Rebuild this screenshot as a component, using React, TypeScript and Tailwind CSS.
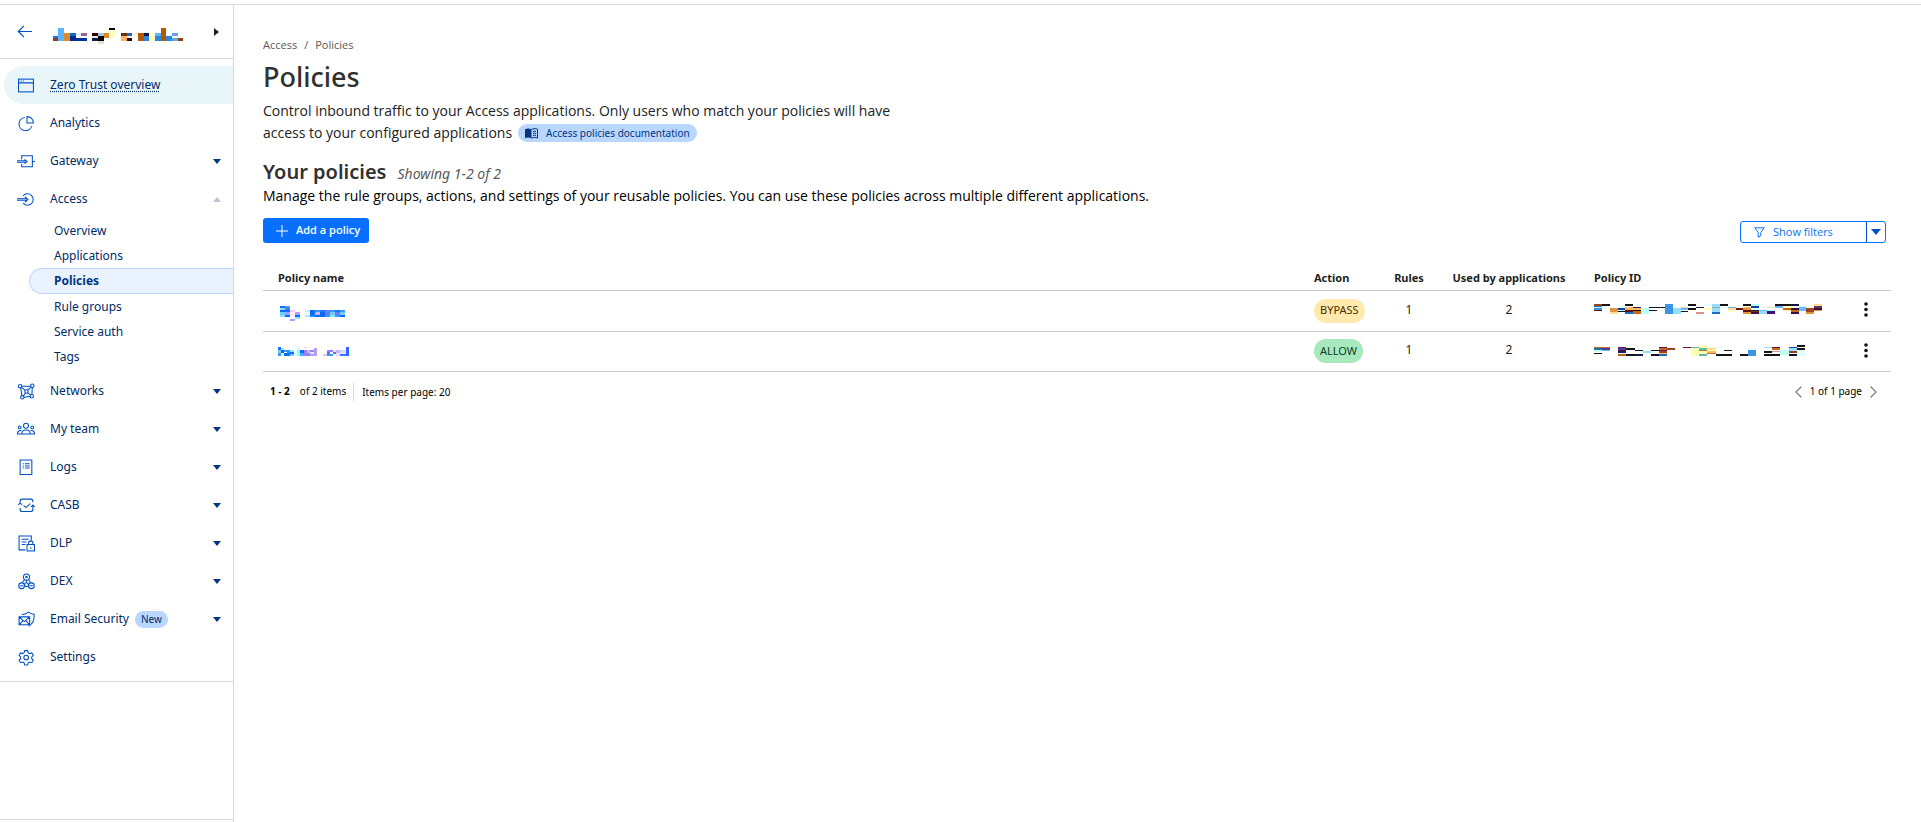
import React, { useState } from "react";

type Rect = [number, number, number, number, string];

// names and ids are shown redacted, each one is a little mosaic of blocks
const Mosaic = ({ rects, w, h, label }: { rects: Rect[]; w: number; h: number; label: string }) => (
  <svg width={w} height={h} viewBox={`0 0 ${w * 3} ${h * 3}`} shapeRendering="crispEdges" role="img" aria-label={label} className="block">
    {rects.map(([x, y, rw, rh, fill], i) => (
      <rect key={i} x={x} y={y} width={rw} height={rh} fill={fill} />
    ))}
  </svg>
);

const accountRects: Rect[] = [
  [0, 15, 15, 9, "#e6ffff"], [0, 24, 15, 6, "#1e78cc"], [0, 30, 15, 9, "#93401a"],
  [15, 0, 18, 39, "#5cb3ff"], [33, 15, 18, 24, "#dd8a2b"],
  [51, 15, 18, 9, "#0a6ac8"], [51, 24, 18, 15, "#00298f"],
  [69, 15, 15, 9, "#e8e8fa"], [84, 15, 18, 9, "#9c6590"], [69, 24, 33, 6, "#f2f8ff"], [69, 30, 33, 9, "#003399"],
  [117, 15, 18, 9, "#300000"], [117, 24, 18, 6, "#f4e6da"], [117, 30, 18, 9, "#0a1f47"],
  [135, 15, 18, 9, "#9fc8e0"], [135, 24, 18, 15, "#000000"], [135, 39, 18, 9, "#e8dfcf"],
  [153, 9, 15, 6, "#ffffe0"], [153, 15, 15, 15, "#dd8a2b"],
  [168, 0, 18, 6, "#000000"], [168, 9, 18, 21, "#ffffb8"],
  [204, 15, 18, 9, "#6b3400"], [204, 24, 18, 15, "#ffb060"],
  [222, 15, 15, 9, "#2a62b0"], [222, 24, 15, 6, "#ffffe0"], [222, 30, 15, 9, "#300000"],
  [237, 15, 17, 9, "#f8f0e8"], [255, 15, 18, 24, "#b35900"],
  [273, 15, 15, 9, "#0b1a45"], [273, 24, 15, 15, "#2a88dd"],
  [288, 15, 18, 9, "#ffffd8"], [288, 24, 18, 15, "#ffffb8"],
  [306, 15, 18, 9, "#5cb3ff"], [306, 24, 18, 15, "#2a88dd"],
  [324, 0, 15, 39, "#b35900"], [339, 15, 17, 9, "#f0faff"], [339, 24, 17, 15, "#2a88dd"],
  [357, 15, 18, 9, "#6fa0e6"], [357, 24, 18, 6, "#ffffe0"], [357, 30, 18, 9, "#5ca8ec"],
  [375, 30, 15, 9, "#93401a"],
];

const nameOne: Rect[] = [
  [6, 0, 15, 6, "#1570ff"], [21, 0, 15, 12, "#3ba0ff"], [6, 6, 15, 6, "#8adcff"], [21, 6, 15, 6, "#5470ff"],
  [6, 12, 15, 6, "#0a6cff"], [21, 12, 15, 6, "#1570ff"], [36, 12, 15, 6, "#f5d0ff"],
  [6, 18, 15, 9, "#6ecfff"], [21, 18, 15, 9, "#a89aff"], [51, 18, 15, 9, "#b79cff"], [36, 21, 15, 6, "#f2eaff"],
  [6, 27, 15, 6, "#8adcff"], [21, 27, 15, 6, "#0a6cff"], [51, 27, 15, 6, "#0a6cff"], [51, 33, 15, 6, "#8ae6ff"], [36, 39, 15, 6, "#b79cff"],
  [81, 12, 15, 6, "#c9eeff"], [96, 12, 15, 6, "#0a6cff"], [111, 12, 15, 6, "#3b96ff"], [126, 12, 15, 6, "#1b7cff"],
  [141, 12, 15, 6, "#6e78f7"], [156, 12, 15, 6, "#3b96ff"], [171, 12, 15, 6, "#1b7cff"], [186, 12, 15, 6, "#3b96ff"],
  [81, 18, 15, 9, "#e6faff"], [96, 18, 15, 9, "#0a6cff"], [111, 18, 15, 9, "#c9b5ff"], [126, 18, 15, 9, "#0a6cff"],
  [141, 18, 15, 9, "#6e78f7"], [156, 18, 15, 9, "#6ecfff"], [171, 18, 15, 9, "#6e78f7"], [186, 18, 15, 9, "#6ecfff"],
  [81, 27, 15, 6, "#b8e6ff"], [96, 27, 15, 6, "#0a8cff"], [111, 27, 30, 6, "#0a6cff"],
  [141, 27, 15, 6, "#3b96ff"], [156, 27, 15, 6, "#8ae6ff"], [171, 27, 15, 6, "#3b96ff"], [186, 27, 15, 6, "#0a6cff"],
];

const nameTwo: Rect[] = [
  [0, 0, 9, 9, "#1570ff"], [9, 3, 9, 6, "#a0e6ff"], [0, 9, 9, 9, "#6ecfff"], [9, 9, 9, 9, "#0a6cff"], [0, 18, 9, 9, "#3b96ff"],
  [9, 18, 9, 9, "#e6ffff"], [18, 9, 9, 6, "#3b96ff"], [18, 18, 9, 9, "#0a6cff"], [27, 9, 9, 9, "#1b9cff"], [27, 18, 9, 9, "#1570ff"],
  [36, 9, 12, 6, "#8ae6ff"], [36, 15, 12, 6, "#0a6cff"], [36, 21, 12, 6, "#6ecfff"], [48, 9, 9, 18, "#e6ffff"],
  [57, 3, 9, 6, "#c9ffff"], [57, 9, 9, 9, "#8affff"], [57, 18, 9, 9, "#a0f0ff"], [66, 9, 12, 9, "#0a6cff"], [66, 18, 12, 9, "#3bb0ff"],
  [78, 0, 9, 3, "#f5d0ff"], [78, 9, 9, 18, "#a080f0"], [87, 9, 9, 9, "#c9b5ff"], [87, 18, 9, 9, "#8a80ff"],
  [96, 9, 12, 6, "#a080f0"], [96, 15, 12, 6, "#e6e0ff"], [96, 21, 12, 6, "#b79cff"], [108, 3, 9, 24, "#b79cff"],
  [135, 21, 12, 6, "#d8c8ff"], [147, 9, 18, 6, "#8a80ff"], [147, 15, 9, 6, "#5470ff"], [147, 21, 18, 6, "#3b96ff"], [165, 15, 9, 6, "#5470ff"],
  [165, 9, 9, 6, "#f2d8ff"], [174, 9, 12, 9, "#c9b5ff"], [174, 18, 12, 9, "#e6d8ff"], [186, 9, 9, 6, "#c9d8ff"],
  [186, 15, 18, 6, "#e6e0ff"], [186, 21, 18, 6, "#3b78ff"], [195, 9, 9, 9, "#f2d8ff"], [204, 0, 9, 27, "#2a6cff"],
];

const idOne: Rect[] = [
  [0, 0, 24, 6, "#9a4520"], [24, 0, 24, 6, "#141414"], [0, 6, 24, 3, "#1e6fc8"], [0, 9, 24, 3, "#b8ffff"], [0, 12, 24, 6, "#3d94e2"], [0, 18, 24, 3, "#6b1414"],
  [24, 9, 24, 3, "#f0ffff"], [48, 12, 24, 12, "#e0943a"], [48, 24, 24, 6, "#ffdc96"],
  [72, 6, 21, 6, "#e6ffff"], [72, 12, 21, 6, "#1440a0"], [72, 18, 21, 3, "#b8ffff"], [72, 21, 21, 3, "#141414"],
  [93, 0, 24, 6, "#141414"], [93, 9, 24, 3, "#ffc070"], [93, 12, 24, 6, "#ffb868"], [93, 18, 24, 6, "#5c1018"], [93, 24, 24, 6, "#1a6ec0"],
  [117, 9, 24, 3, "#18184a"], [117, 12, 24, 6, "#ffb868"], [117, 18, 24, 3, "#141414"], [117, 21, 24, 9, "#c06a18"],
  [141, 12, 24, 18, "#b8ffff"], [165, 9, 48, 3, "#141414"], [165, 18, 24, 3, "#141414"],
  [213, 0, 24, 30, "#3d94e2"], [237, 12, 24, 18, "#98dcff"], [261, 9, 21, 3, "#ffc89c"], [261, 12, 21, 6, "#6ab8ff"], [261, 21, 21, 3, "#141414"],
  [282, 0, 24, 6, "#141414"], [282, 12, 24, 6, "#141414"], [306, 9, 24, 3, "#18184a"], [306, 24, 24, 6, "#e09090"],
  [330, 0, 24, 6, "#e0ffff"], [330, 12, 24, 6, "#ffffb0"], [354, 0, 24, 9, "#98dcff"], [354, 9, 24, 3, "#98b090"], [354, 12, 24, 12, "#98dcff"], [354, 24, 24, 6, "#1a6ec0"],
  [378, 0, 24, 6, "#141414"], [378, 9, 24, 3, "#e0ffff"], [402, 9, 24, 3, "#6ab8e8"], [402, 12, 24, 6, "#ffdc96"], [402, 18, 24, 6, "#ffffc8"],
  [426, 12, 21, 6, "#6b1414"], [447, 0, 24, 6, "#141414"], [447, 9, 24, 3, "#ffc070"], [447, 12, 24, 6, "#e0943a"], [447, 18, 24, 6, "#5c1018"], [447, 24, 24, 6, "#e0943a"],
  [471, 0, 24, 6, "#b8ffff"], [471, 6, 24, 6, "#1440a0"], [471, 12, 24, 6, "#e0ffff"], [471, 18, 24, 3, "#18184a"], [471, 21, 24, 3, "#6b3414"], [471, 24, 24, 6, "#3a1040"],
  [495, 9, 24, 3, "#f0ffff"], [495, 18, 24, 3, "#6ab8ff"], [495, 21, 24, 9, "#98dcff"], [519, 9, 24, 3, "#ffdcb0"], [519, 18, 24, 3, "#b8ffff"], [519, 21, 24, 9, "#40106a"],
  [543, 0, 48, 6, "#141414"], [543, 6, 24, 6, "#6ab8ff"], [567, 6, 24, 6, "#ffffc8"], [567, 12, 24, 6, "#c06a18"], [567, 18, 24, 3, "#ffe8b0"],
  [591, 0, 24, 6, "#141440"], [591, 9, 24, 3, "#ffffc8"], [591, 12, 24, 6, "#3a1040"], [591, 18, 24, 6, "#c06a18"], [591, 24, 24, 6, "#3a1040"],
  [615, 6, 21, 3, "#b8ffff"], [615, 9, 21, 12, "#6ab8ff"], [636, 12, 24, 12, "#9a4520"], [636, 24, 24, 6, "#e0943a"],
  [660, 0, 24, 6, "#ffdc96"], [660, 6, 24, 6, "#6b3450"], [660, 12, 24, 6, "#3a1040"], [660, 18, 24, 3, "#e0943a"],
];

const idTwo: Rect[] = [
  [0, 6, 24, 3, "#b86a30"], [0, 9, 24, 6, "#1a6ea0"], [0, 15, 24, 6, "#c8ffe8"], [0, 24, 24, 3, "#141414"], [0, 27, 24, 3, "#ffffd8"],
  [24, 6, 24, 3, "#b86a30"], [24, 9, 24, 6, "#4840a0"], [24, 15, 24, 3, "#6ab8ff"],
  [72, 6, 24, 3, "#6b1450"], [72, 9, 24, 6, "#4840a0"], [72, 15, 24, 3, "#6b1414"], [72, 18, 24, 6, "#18186a"], [72, 24, 24, 3, "#f0ffff"], [72, 27, 24, 6, "#b86a18"],
  [96, 9, 27, 6, "#141414"], [96, 27, 27, 6, "#141414"], [123, 15, 24, 3, "#141414"], [123, 27, 24, 6, "#18184a"],
  [147, 18, 24, 6, "#98dcff"], [171, 15, 24, 3, "#141414"], [171, 27, 24, 6, "#141414"],
  [195, 6, 24, 3, "#6b1440"], [195, 9, 24, 6, "#c06a18"], [195, 15, 24, 3, "#6b1450"], [195, 18, 24, 6, "#9a4520"], [195, 24, 24, 3, "#ffb868"], [195, 27, 24, 6, "#1a6ec0"],
  [219, 9, 24, 6, "#9a4520"], [243, 24, 24, 3, "#ffffd8"], [267, 6, 24, 3, "#6b1430"],
  [291, 6, 24, 3, "#60b8b0"], [291, 9, 24, 24, "#ffffb0"], [315, 0, 24, 9, "#ffffb0"], [315, 9, 24, 6, "#60b8b8"], [315, 15, 24, 3, "#b87828"], [315, 18, 24, 9, "#ffffb0"], [315, 27, 24, 6, "#60b8b8"],
  [339, 6, 27, 3, "#ffffb0"], [339, 9, 27, 6, "#ffdc96"], [339, 15, 27, 3, "#ffffb0"], [339, 18, 27, 6, "#ffb868"], [339, 24, 27, 3, "#c06a18"],
  [366, 6, 24, 3, "#e0ffff"], [366, 27, 48, 6, "#141414"], [390, 15, 24, 3, "#141414"], [438, 27, 24, 6, "#141414"], [462, 9, 24, 6, "#e6ffff"], [462, 15, 24, 18, "#3d94e2"],
  [510, 6, 24, 3, "#98dcff"], [510, 18, 24, 6, "#141414"], [510, 27, 48, 6, "#141414"], [534, 6, 24, 3, "#6b1450"], [534, 9, 24, 6, "#c06a18"], [534, 18, 24, 3, "#e09090"],
  [558, 15, 27, 15, "#b8ffff"], [558, 24, 27, 3, "#c8ffd8"], [585, 6, 24, 3, "#1440a0"], [585, 9, 24, 9, "#98dcff"], [585, 18, 24, 6, "#9a4520"], [585, 27, 24, 6, "#141414"],
  [609, 0, 24, 6, "#141414"], [609, 9, 24, 6, "#141414"], [609, 15, 24, 18, "#e0ffff"],
];

const icons: Record<string, React.ReactNode> = {
  overview: <><rect x=".5" y="2" width="14" height="12" /><path d="M.5 5.5h14M2.5 3.8h1M4.5 3.8h1" /></>,
  analytics: <path d="M6.500 2.300A6.200 6.200 0 1 0 13 10.500M8.500 1.500v6h6a6 6 0 0 0-6-6z" />,
  gateway: <path d="M3.500 6V2.500h10v10.500h-10V10M-1 8.700h8.500M-1 7.300h8.500M6.200 6l2.400 2-2.400 2M13.500 8h2.500" />,
  access: <path d="M4.800 4.500a5.400 5.400 0 1 1 0 7M-1 7.300h9.500M-1 8.700h9.500M6.500 5.400 9.400 8l-2.900 2.600" />,
  networks: (
    <>
      <circle cx="2" cy="3" r="1.6" /><circle cx="13.5" cy="2.5" r="1.6" /><circle cx="4" cy="13.5" r="1.6" /><circle cx="13" cy="12.5" r="1.6" /><circle cx="8" cy="8" r="1.6" />
      <path d="M3.600 3H12M2.500 4.5l1.200 7.4M13.4 4.2l-.3 6.6M5.6 13.4l5.8-.7M3.400 4.200 6.800 7M12.2 3.8 9.2 6.8M5.1 12.2 7 9.2M11.8 11.4 9.2 9" />
    </>
  ),
  team: (
    <>
      <circle cx="7.5" cy="4.5" r="2.3" /><circle cx="1.6" cy="6" r="1.3" /><circle cx="13.4" cy="6" r="1.3" />
      <path d="M3.500 12.300c0-5 8-5 8 0zM3.200 9.100C.8 8.500-.5 10.100-.5 12.300h4M11.800 9.100c2.400-.6 3.700 1 3.700 3.200h-4" />
    </>
  ),
  logs: <path d="M2 1h11v13.500H2zM4.500 4.500h1M6.500 4.500H11M4.500 6.500h1M6.500 6.500H11M4.500 8.500h1M6.500 8.500H11" />,
  casb: <path d="M2 6V4.200C2 2.800 2.800 2 4 2h8c1.200 0 2 .8 2 2.200V5M.3 7.300 2 5.600l1.700 1.700M14 8v3.500c0 1.400-.8 2.200-2 2.200H4c-1.200 0-2-.8-2-2.200V10M12.300 9.200 14 7.500l1.700 1.700M5.200 7.800 7.500 10l4-3.800" />,
  dlp: <><path d="M12.500 5V1h-11.500v13h6M3.500 4h6.500M3.500 6.500h4.500M3.500 9h3.500" /><rect x="8.500" y="9" width="7" height="6" /><path d="M10 9V7.500a2 2 0 0 1 4 0V9M12 11.200v1.800" /></>,
  dex: (
    <>
      <circle cx="8" cy="3.800" r="2.900" /><circle cx="8" cy="3.800" r=".7" /><circle cx="3.400" cy="12" r="2.700" /><circle cx="12.600" cy="12" r="2.700" /><circle cx="8" cy="11" r="1.800" />
      <path d="M6 6.300 4 9.200M10 6.300l2 2.900M8 6.800v2.400M2 12h3M11 12h3" />
    </>
  ),
  email: <><path d="M1 5.500h10v7.500H1zM1 5.500 6 10l5-4.500M1 13l3.600-4M11 13 7.400 9" /><path d="M3.500 3.500c2.500 0 4.500-.9 6.500-2.400 1.500 1.300 3.200 1.900 5.200 2.100.4 5-1 8.800-5.200 11.200" /></>,
  settings: (
    <>
      <circle cx="7.700" cy="8" r="2.200" />
      <path d="M6.300 1.500h2.800l.5 2 1.400.8 2-.6 1.400 2.400-1.500 1.400v1.600l1.500 1.400-1.400 2.400-2-.6-1.400.8-.5 2H6.300l-.5-2-1.400-.8-2 .6L1 10.500l1.500-1.400V7.500L1 6.100l1.400-2.400 2 .6 1.400-.8z" />
    </>
  ),
};

const NavIcon = ({ name }: { name: string }) => (
  <svg width="17" height="17" viewBox="0 0 16 16" fill="none" stroke="#0051c3" strokeWidth="1" className="shrink-0 overflow-visible">
    {icons[name]}
  </svg>
);

const Caret = ({ up = false }: { up?: boolean }) => (
  <svg width="8" height="5" viewBox="0 0 8 5" className="shrink-0">
    {up ? <path d="M0 5 4 0l4 5z" fill="#b9c6d8" /> : <path d="M0 0h8L4 5z" fill="#003682" />}
  </svg>
);

const navTop = [
  { label: "Analytics", icon: "analytics", caret: false },
  { label: "Gateway", icon: "gateway", caret: true },
];

const subItems = ["Overview", "Applications", "Policies", "Rule groups", "Service auth", "Tags"];

const navBottom = [
  { label: "Networks", icon: "networks", caret: true },
  { label: "My team", icon: "team", caret: true },
  { label: "Logs", icon: "logs", caret: true },
  { label: "CASB", icon: "casb", caret: true },
  { label: "DLP", icon: "dlp", caret: true },
  { label: "DEX", icon: "dex", caret: true },
  { label: "Email Security", icon: "email", caret: true, badge: "New" },
  { label: "Settings", icon: "settings", caret: false },
];

const NavItem = ({ label, icon, caret, badge }: { label: string; icon: string; caret: boolean; badge?: string }) => (
  <a href="#" className="flex items-center h-[38px] pl-[18px] pr-3">
    <NavIcon name={icon} />
    <span className="ml-[15px]">{label}</span>
    {badge && <span className="ml-[6px] px-[6px] h-[17px] rounded-full bg-[#b9d6ff] text-[10px] leading-[17px]">{badge}</span>}
    {caret && <span className="ml-auto"><Caret /></span>}
  </a>
);

const Sidebar = () => {
  const [open, setOpen] = useState(true);

  return (
    <aside className="flex flex-col shrink-0 w-[234px] border-r border-[#d9d9d9] text-[12px] text-[#002b66]">
      <div className="flex items-center h-[54px] pl-[17px] pr-[14px] border-b border-[#d9d9d9]">
        <button aria-label="Back">
          <svg width="16" height="13" viewBox="0 0 16 13" fill="none" stroke="#0051c3" strokeWidth="1.2" className="block">
            <path d="M15 6.500H1.500M7 .8 1.300 6.500 7 12.200" />
          </svg>
        </button>
        <button className="flex flex-1 items-center justify-between pl-5 pt-2">
          <Mosaic rects={accountRects} w={130} h={16} label="Account" />
          <svg width="5" height="8" viewBox="0 0 5 8" className="mb-2"><path d="M0 0v8l5-4z" fill="#222" /></svg>
        </button>
      </div>
      <nav className="pt-[7px] pb-[5px] border-b border-[#d9d9d9]">
        <a href="#" className="flex items-center h-[38px] ml-1 pl-[14px] rounded-l-full bg-[#e8f6fa]">
          <NavIcon name="overview" />
          <span className="ml-[15px] underline decoration-dotted underline-offset-2">Zero Trust overview</span>
        </a>
        {navTop.map((item) => (
          <NavItem key={item.label} {...item} />
        ))}
        <button onClick={() => setOpen(!open)} aria-expanded={open} className="flex items-center w-full h-[38px] pl-[18px] pr-3">
          <NavIcon name="access" />
          <span className="ml-[15px]">Access</span>
          <span className="ml-auto"><Caret up={open} /></span>
        </button>
        {open && (
          <ul className="pb-[3px]">
            {subItems.map((item) => (
              <li key={item}>
                {item === "Policies" ? (
                  <a href="#" aria-current="page" className="flex items-center h-[26px] ml-[29px] pl-6 rounded-l-full border border-r-0 border-[#b9d6ff] bg-[#ebf2ff] font-bold text-[#003682]">
                    {item}
                  </a>
                ) : (
                  <a href="#" className="flex items-center h-[25px] pl-[54px]">{item}</a>
                )}
              </li>
            ))}
          </ul>
        )}
        {navBottom.map((item) => (
          <NavItem key={item.label} {...item} />
        ))}
      </nav>
      <div className="mt-auto h-[3px] border-t border-[#d9d9d9]" />
    </aside>
  );
};

const policies = [
  { name: nameOne, nameW: 68, nameH: 15, action: "BYPASS", rules: 1, apps: 2, id: idOne, idW: 228, idH: 11 },
  { name: nameTwo, nameW: 71, nameH: 9, action: "ALLOW", rules: 1, apps: 2, id: idTwo, idW: 211, idH: 11 },
];

const PolicyTable = () => (
  <table className="w-full table-fixed text-[12px] text-[#1d1f20]">
    <colgroup>
      <col />
      <col className="w-[80px]" />
      <col className="w-[58px]" />
      <col className="w-[142px]" />
      <col className="w-[260px]" />
      <col className="w-[51px]" />
    </colgroup>
    <thead>
      <tr className="h-[27px] border-b border-[#c9c9c9] text-left text-[11px]">
        <th className="pt-1 pl-[15px] font-bold">Policy name</th>
        <th className="pt-1 pl-[14px] font-bold">Action</th>
        <th className="pt-1 text-center font-bold">Rules</th>
        <th className="pt-1 text-center font-bold">Used by applications</th>
        <th className="pt-1 pl-[14px] font-bold">Policy ID</th>
        <th aria-label="Menu" />
      </tr>
    </thead>
    <tbody>
      {policies.map((p, i) => (
        <tr key={i} className="h-[41px] last:h-10 border-b border-[#c9c9c9]">
          <td className={i === 0 ? "pl-[15px] pt-[6px]" : "pl-[15px]"}>
            <a href="#"><Mosaic rects={p.name} w={p.nameW} h={p.nameH} label="Policy name" /></a>
          </td>
          <td className="pl-[14px]">
            {p.action === "BYPASS" ? (
              <span className="flex items-center w-fit h-6 px-[6px] rounded-full bg-[#ffe9ac] text-[11px] text-[#4d2c00]">BYPASS</span>
            ) : (
              <span className="flex items-center w-fit h-6 px-[6px] rounded-full bg-[#a8e8bd] text-[11px] text-[#0f4024]">ALLOW</span>
            )}
          </td>
          <td className="pb-[2px] text-center">{p.rules}</td>
          <td className="pb-[2px] text-center">{p.apps}</td>
          <td className="pl-[14px] pb-[2px]"><Mosaic rects={p.id} w={p.idW} h={p.idH} label="Policy ID" /></td>
          <td className="pb-[2px]">
            <button aria-label="Policy actions" className="block mx-auto">
              <svg width="4" height="15" viewBox="0 0 4 15" className="block" fill="#111">
                <circle cx="2" cy="2" r="1.800" /><circle cx="2" cy="7.500" r="1.800" /><circle cx="2" cy="13" r="1.800" />
              </svg>
            </button>
          </td>
        </tr>
      ))}
    </tbody>
  </table>
);

const App = () => {
  return (
    <div className="flex flex-col min-h-screen pt-1 bg-white font-['Noto_Sans','Open_Sans',sans-serif]">
      <div className="flex flex-1 border-t border-[#d9d9d9]">
        <Sidebar />
        <main className="flex-1 min-w-0 pl-[29px] pr-[30px] pt-8">
          <div className="flex gap-[7px] text-[11px] leading-4 text-[#595959] font-['Open_Sans',sans-serif]">
            <a href="#">Access</a>
            <span>/</span>
            <span>Policies</span>
          </div>
          <h1 className="mt-1 text-[27px] leading-10 font-medium text-[#313131]">Policies</h1>
          <div className="mt-[3px] w-[640px] text-[14px] leading-[22px] text-[#222222] font-['Open_Sans',sans-serif]">
            <p>Control inbound traffic to your Access applications. Only users who match your policies will have</p>
            <div className="flex items-center gap-[6px]">
              <span>access to your configured applications</span>
              <a href="#" className="flex items-center px-[7px] h-[18px] rounded-full bg-[#b9d6ff] text-[10px] leading-[18px] text-[#003682] font-['Noto_Sans',sans-serif]">
                <svg width="13" height="11" viewBox="0 0 13 11" className="mr-2">
                  <path d="M0 1.200C2 .3 4.500.3 6.500 1.400v8.800C4.500 9.200 2 9.200 0 10z" fill="#003682" />
                  <path d="M6.500 1.400C8.500.4 10.800.4 12.500 1.200V10c-1.800-.8-4-.7-6 .2M8 3.500c1-.3 2-.4 3-.2M8 5.500c1-.3 2-.4 3-.2M8 7.500c1-.3 2-.4 3-.2" fill="none" stroke="#003682" />
                </svg>
                Access policies documentation
              </a>
            </div>
          </div>
          <div className="flex items-baseline gap-[11px] mt-4">
            <h2 className="text-[20px] leading-6 font-semibold text-[#313131]">Your policies</h2>
            <span className="text-[14px] leading-6 italic text-[#595959]">Showing 1-2 of 2</span>
          </div>
          <p className="text-[14px] leading-5 text-black font-['Open_Sans',sans-serif]">
            Manage the rule groups, actions, and settings of your reusable policies. You can use these policies across multiple different applications.
          </p>
          <div className="flex items-end justify-between mt-3 pr-[5px]">
            <button className="flex items-center h-[25px] pl-[13px] pr-[9px] rounded-[3px] bg-[#086fff] text-[11px] font-semibold text-white font-['Open_Sans',sans-serif]">
              <svg width="12" height="12" viewBox="0 0 12 12" stroke="#fff" className="mr-2"><path d="M6 0v12M0 6h12" /></svg>
              Add a policy
            </button>
            <div className="flex h-[22px] rounded-[3px] border border-[#086fff] text-[11px] text-[#086fff]">
              <button className="flex items-center w-[125px] pl-[13px] font-medium font-['Open_Sans',sans-serif]">
                <svg width="11" height="11" viewBox="0 0 11 11" fill="none" stroke="#086fff" className="mr-2"><path d="M.8.800h9.400L6.800 5.500v3.300l-2.600 1.400V5.500z" /></svg>
                Show filters
              </button>
              <button aria-label="More filter options" className="flex items-center justify-center w-[19px] border-l border-[#0051c3]">
                <svg width="10" height="6" viewBox="0 0 10 6"><path d="M0 0h10L5 6z" fill="#0051c3" /></svg>
              </button>
            </div>
          </div>
          <div className="mt-5">
            <PolicyTable />
          </div>
          <div className="flex items-center justify-between h-10 pl-[7px] pr-[14px] text-[10px] text-black">
            <div className="flex items-center">
              <span className="font-bold">1 - 2</span>
              <span className="ml-[10px]">of 2 items</span>
              <span className="ml-[7px] pl-2 leading-[18px] border-l border-[#d9d9d9]">Items per page: 20</span>
            </div>
            <div className="flex items-center gap-2">
              <button aria-label="Previous page">
                <svg width="7" height="12" viewBox="0 0 7 12" fill="none" stroke="#808285" strokeWidth="1.300" className="block"><path d="M6.500.5 1 6l5.500 5.500" /></svg>
              </button>
              <span>1 of 1 page</span>
              <button aria-label="Next page">
                <svg width="7" height="12" viewBox="0 0 7 12" fill="none" stroke="#808285" strokeWidth="1.300" className="block"><path d="M.5.500 6 6 .5 11.500" /></svg>
              </button>
            </div>
          </div>
        </main>
      </div>
    </div>
  );
};

export default App;
